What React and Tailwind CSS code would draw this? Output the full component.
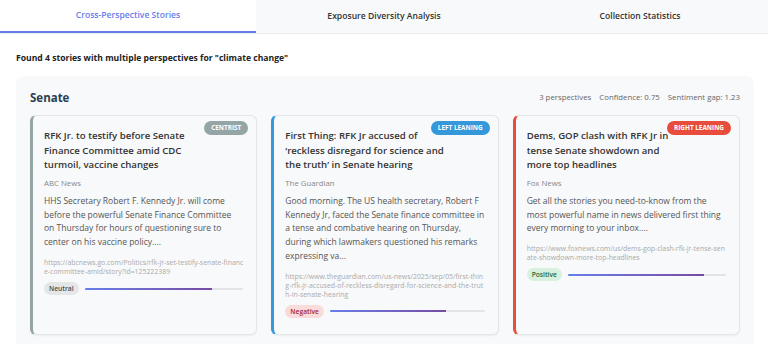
const stories = [
  {
    id: 1,
    title: "RFK Jr. to testify before Senate Finance Committee amid CDC turmoil, vaccine changes",
    source: "ABC News",
    summary:
      "HHS Secretary Robert F. Kennedy Jr. will come before the powerful Senate Finance Committee on Thursday for hours of questioning sure to center on his vaccine policy....",
    url: "https://abcnews.go.com/Politics/rfk-jr-set-testify-senate-finance-committee-amid/story?id=125222389",
    leaning: "Centrist",
    sentiment: "Neutral",
    score: 80,
  },
  {
    id: 2,
    title: "First Thing: RFK Jr accused of \u2018reckless disregard for science and the truth\u2019 in Senate hearing",
    source: "The Guardian",
    summary:
      "Good morning. The US health secretary, Robert F Kennedy Jr, faced the Senate finance committee in a tense and combative hearing on Thursday, during which lawmakers questioned his remarks expressing va...",
    url: "https://www.theguardian.com/us-news/2025/sep/05/first-thing-rfk-jr-accused-of-reckless-disregard-for-science-and-the-truth-in-senate-hearing",
    leaning: "Left Leaning",
    sentiment: "Negative",
    score: 75,
  },
  {
    id: 3,
    title: "Dems, GOP clash with RFK Jr in tense Senate showdown and more top headlines",
    source: "Fox News",
    summary:
      "Get all the stories you need-to-know from the most powerful name in news delivered first thing every morning to your inbox....",
    url: "https://www.foxnews.com/us/dems-gop-clash-rfk-jr-tense-senate-showdown-more-top-headlines",
    leaning: "Right Leaning",
    sentiment: "Positive",
    score: 86,
  },
];

const leaningStyles = {
  Centrist: { border: "border-l-[#95a5a6]", badge: "bg-[#95a5a6]" },
  "Left Leaning": { border: "border-l-[#3498db]", badge: "bg-[#3498db]" },
  "Right Leaning": { border: "border-l-[#e74c3c]", badge: "bg-[#e74c3c]" },
};

const sentimentStyles = {
  Neutral: "bg-[#e4e6e8] text-[#4a4f55]",
  Negative: "bg-[#fadbdc] text-[#a32a36]",
  Positive: "bg-[#d8f0de] text-[#1e6b35]",
};

function StoryCard({ story }) {
  const style = leaningStyles[story.leaning];
  return (
    <div
      className={`relative bg-[#f8f9fa] border border-[#e3e6ea] border-l-[3px] ${style.border} rounded-md shadow-[0_1px_2px_rgba(0,0,0,0.05)] pl-[11px] pr-[13px] pt-[13px] pb-4`}
    >
      <span
        className={`absolute top-[5px] right-[8px] ${style.badge} text-white text-[6.4px] font-bold uppercase rounded-full px-[7px] py-[2px] leading-[10px]`}
      >
        {story.leaning}
      </span>
      <h3 className="text-[9.6px] font-semibold leading-[14.5px] text-[#333] max-w-[159px]">
        {story.title}
      </h3>
      <p className="text-[7.8px] leading-[11px] text-[#888] mt-[5px]">{story.source}</p>
      <p className="text-[8.5px] leading-[13.6px] text-[#555] mt-[5.5px]">{story.summary}</p>
      <p className="text-[6.9px] leading-[9px] text-[#aaa] mt-[9.5px] break-all">{story.url}</p>
      <div className="flex items-center gap-[6px] mt-[6px]">
        <span
          className={`${sentimentStyles[story.sentiment]} text-[6.7px] font-semibold rounded-full px-[5px] py-[2px] leading-[9px]`}
        >
          {story.sentiment}
        </span>
        <div className="flex-1 h-[2px] bg-[#e2e4e7] rounded-full overflow-hidden">
          <div
            className="h-full bg-gradient-to-r from-[#667eea] to-[#764ba2]"
            style={{ width: `${story.score}%` }}
          />
        </div>
      </div>
    </div>
  );
}

export default function App() {
  const tabs = ["Cross-Perspective Stories", "Exposure Diversity Analysis", "Collection Statistics"];
  return (
    <div className="min-h-[344px] bg-white font-['Open_Sans','Noto_Sans',sans-serif]">
      {/* Tabs */}
      <div className="grid grid-cols-3 bg-[#f8f9fa] border-b border-[#e9ecef]">
        {tabs.map((tab, i) => (
          <button
            key={tab}
            className={`h-[33px] text-[8.6px] font-semibold ${
              i === 0
                ? "bg-white text-[#667eea] border-b-2 border-[#667eea]"
                : "text-[#333]"
            }`}
          >
            {tab}
          </button>
        ))}
      </div>

      <div className="pl-4 pr-[14px] pt-[18px]">
        <p className="text-[8.6px] font-bold text-[#222]">
          Found 4 stories with multiple perspectives for "climate change"
        </p>

        {/* Story group */}
        <div className="mt-[11px] bg-[#f8f9fa] rounded-lg px-[14px] pt-[13px] pb-4">
          <div className="flex items-center justify-between">
            <h2 className="text-[11.5px] font-bold text-[#2c3e50]">Senate</h2>
            <div className="flex gap-[8px] text-[7.8px] text-[#666]">
              <span>3 perspectives</span>
              <span>Confidence: 0.75</span>
              <span>Sentiment gap: 1.23</span>
            </div>
          </div>
          <div className="grid grid-cols-3 gap-[14px] mt-[9px]">
            {stories.map((s) => (
              <StoryCard key={s.id} story={s} />
            ))}
          </div>
        </div>
      </div>
    </div>
  );
}
